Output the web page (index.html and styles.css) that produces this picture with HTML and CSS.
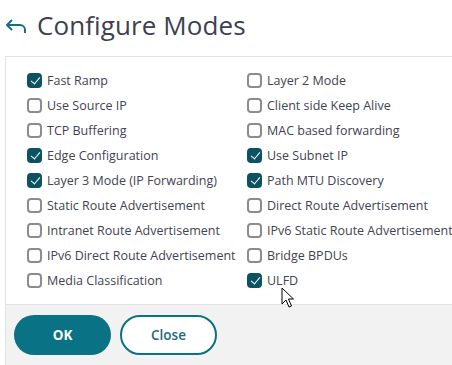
FILE: index.html
```html
<!DOCTYPE html>
<html lang="en">
<head>
    <meta charset="UTF-8">
    <title>Configure Modes</title>
    <link rel="stylesheet" href="styles.css">
</head>
<body>
    <div class="header">
        <svg class="back" width="22" height="16" viewBox="0 0 22 16">
            <path d="M7 2 L2 7 L7 12 M2 7 H15 A5 5 0 0 1 20 12 V15" fill="none" stroke="#17707f" stroke-width="2"/>
        </svg>
        <h1>Configure Modes</h1>
    </div>

    <div class="panel">
        <div class="grid">
            <label class="opt"><span class="box on"></span>Fast Ramp</label>
            <label class="opt"><span class="box"></span>Layer 2 Mode</label>
            <label class="opt"><span class="box"></span>Use Source IP</label>
            <label class="opt"><span class="box"></span>Client side Keep Alive</label>
            <label class="opt"><span class="box"></span>TCP Buffering</label>
            <label class="opt"><span class="box"></span>MAC based forwarding</label>
            <label class="opt"><span class="box on"></span>Edge Configuration</label>
            <label class="opt"><span class="box on"></span>Use Subnet IP</label>
            <label class="opt"><span class="box on"></span>Layer 3 Mode (IP Forwarding)</label>
            <label class="opt"><span class="box on"></span>Path MTU Discovery</label>
            <label class="opt"><span class="box"></span>Static Route Advertisement</label>
            <label class="opt"><span class="box"></span>Direct Route Advertisement</label>
            <label class="opt"><span class="box"></span>Intranet Route Advertisement</label>
            <label class="opt"><span class="box"></span>IPv6 Static Route Advertisement</label>
            <label class="opt"><span class="box"></span>IPv6 Direct Route Advertisement</label>
            <label class="opt"><span class="box"></span>Bridge BPDUs</label>
            <label class="opt"><span class="box"></span>Media Classification</label>
            <label class="opt"><span class="box on"></span>ULFD
                <svg class="cursor" width="14" height="22" viewBox="0 0 14 22">
                    <path d="M1 1 V17 L5 13 L8 20 L10.5 19 L7.5 12 H12.5 Z" fill="#fff" stroke="#000" stroke-width="1"/>
                </svg>
            </label>
        </div>
        <div class="footer">
            <button class="btn primary">OK</button>
            <button class="btn secondary">Close</button>
        </div>
    </div>
</body>
</html>
```

FILE: styles.css
```css
* {
    margin: 0;
    padding: 0;
    box-sizing: border-box;
}

body {
    font-family: "Open Sans", Arial, sans-serif;
    background-color: #fff;
    color: #3a3a48;
    width: 452px;
    height: 365px;
    overflow: hidden;
}

.header {
    display: flex;
    align-items: center;
    height: 56px;
    padding-left: 5px;
    padding-bottom: 6px;
}

.back {
    margin-right: 10px;
    margin-top: 2px;
}

h1 {
    font-size: 26px;
    font-weight: 400;
    color: #3d4150;
    letter-spacing: 0.1px;
}

.panel {
    margin-left: 5px;
    width: 460px;
    border: 1px solid #e2e2e2;
    border-right: none;
}

.grid {
    display: grid;
    grid-template-columns: 220px 1fr;
    padding: 11px 0 11px 21px;
}

.opt {
    display: flex;
    align-items: center;
    height: 25px;
    font-size: 12.5px;
    color: #3f4352;
    white-space: nowrap;
    position: relative;
}

.box {
    width: 15px;
    height: 15px;
    border: 2px solid #8c8c8c;
    border-radius: 4px;
    margin-right: 5px;
    flex-shrink: 0;
    position: relative;
}

.box.on {
    background-color: #0c5263;
    border-color: #0c5263;
}

.box.on::after {
    content: "";
    position: absolute;
    left: 3.5px;
    top: 0;
    width: 4px;
    height: 8px;
    border: solid #fff;
    border-width: 0 1.5px 1.5px 0;
    transform: rotate(40deg);
}

.cursor {
    position: absolute;
    left: 34px;
    top: 19px;
}

.footer {
    display: flex;
    gap: 9px;
    padding: 10px 8px;
    background-color: #f2f2f2;
    border-top: 1px solid #e2e2e2;
}

.btn {
    height: 40px;
    width: 97px;
    border-radius: 20px;
    font-family: "Open Sans", Arial, sans-serif;
    font-size: 13.5px;
}

.primary {
    background-color: #0a7285;
    color: #fff;
    border: none;
    font-weight: 700;
}

.secondary {
    background-color: #fff;
    color: #1a6b7c;
    border: 2px solid #0a7285;
    font-weight: 600;
}
```
